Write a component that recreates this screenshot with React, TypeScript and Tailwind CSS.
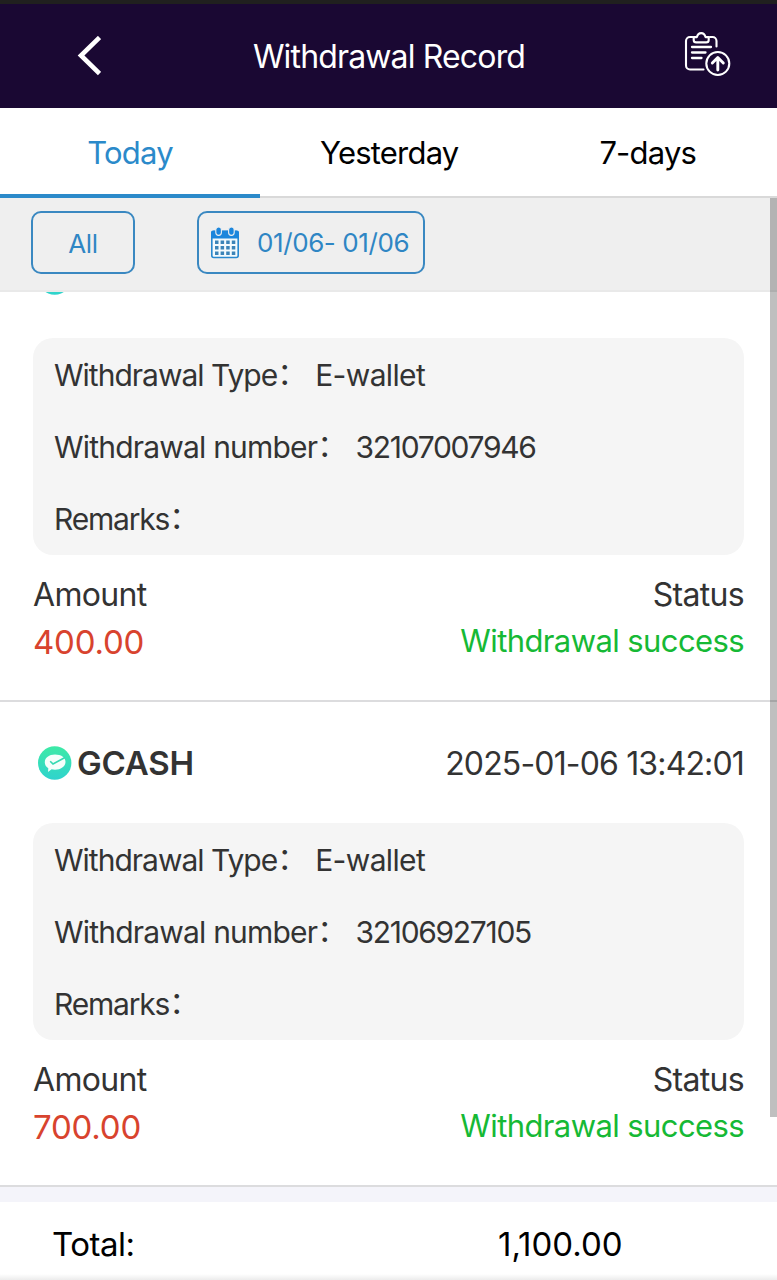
import React from 'react';

type RecordItem = {
  wallet?: string;
  time?: string;
  type: string;
  number: string;
  remarks: string;
  amount: string;
  status: string;
};

const tabs = ['Today', 'Yesterday', '7-days'];

const records: RecordItem[] = [
  {
    type: 'E-wallet',
    number: '32107007946',
    remarks: '',
    amount: '400.00',
    status: 'Withdrawal success',
  },
  {
    wallet: 'GCASH',
    time: '2025-01-06 13:42:01',
    type: 'E-wallet',
    number: '32106927105',
    remarks: '',
    amount: '700.00',
    status: 'Withdrawal success',
  },
];

const BackIcon: React.FC = () => (
  <svg className="w-[26px] h-10" viewBox="0 0 26 40" fill="none">
    <path d="M24.500 1.500 6 19.500l18.500 18" stroke="#fff" strokeWidth="4.600" />
  </svg>
);

const ClipboardUploadIcon: React.FC = () => (
  <svg className="w-12 h-12" viewBox="0 0 48 48" fill="none" stroke="#fff" strokeLinecap="round" strokeLinejoin="round">
    <path d="M8.500 5H6a4 4 0 0 0-4 4V33.500a4 4 0 0 0 4 4h13.500M26 5h2.500a4 4 0 0 1 4 4V14.500" strokeWidth="2.100" />
    <path d="M9.700 4.500h3.200c.6-2.500 2-4 4.300-4s3.700 1.500 4.300 4h3.200v2.800a2.500 2.500 0 0 1-2.500 2.500h-10a2.500 2.500 0 0 1-2.500-2.500z" transform="translate(0 0.600)" strokeWidth="2.100" />
    <path d="M8 15h19M8 20.500h13.500M8 26h9.500" strokeWidth="2.300" />
    <circle cx="33.800" cy="31.500" r="11.500" strokeWidth="2.100" />
    <path d="M33.800 38V26.500M28.300 31l5.500-5.500 5.500 5.500" strokeWidth="2.900" />
  </svg>
);

const CalendarIcon: React.FC = () => (
  <svg className="w-7 h-8" viewBox="0 0 28 32">
    <rect x="0.800" y="4.500" width="26.400" height="26" rx="2" fill="#f3fafd" stroke="#2788cf" strokeWidth="1.600" />
    <path d="M0 11.500V5.500a2 2 0 0 1 2-2h24a2 2 0 0 1 2 2v6z" fill="#1c86dc" />
    <rect x="4.800" y="0" width="5.600" height="8.400" rx="2.800" fill="#1c86dc" stroke="#efefef" strokeWidth="1.100" />
    <rect x="17.600" y="0" width="5.600" height="8.400" rx="2.800" fill="#1c86dc" stroke="#efefef" strokeWidth="1.100" />
    {[13.5, 19, 24.5].map((y) =>
      [4, 9.6, 15.2, 20.8].map((x) => <rect key={`${x}-${y}`} x={x} y={y} width="3.500" height="3.500" fill="#3b84b8" />)
    )}
  </svg>
);

const WalletLogo: React.FC = () => (
  <svg className="w-[34px] h-[34px]" viewBox="0 0 34 34">
    <defs>
      <linearGradient id="wallet" x1="0" y1="0" x2="0" y2="1">
        <stop offset="0" stopColor="#3deaa6" />
        <stop offset="1" stopColor="#2fd3cd" />
      </linearGradient>
    </defs>
    <circle cx="16.700" cy="17" r="16.700" fill="url(#wallet)" />
    <path d="M17 8.500c6 0 10.500 2.800 10.500 7.300 0 4.800-4.800 7.900-10.500 7.900-1.300 0-2.400-.1-3.400-.4L10 26l.3-3.800C8 20.900 6.800 18.900 6.800 16.300c0-4.700 4.400-7.800 10.200-7.800z" fill="#f4fffb" />
    <path d="M12.200 15.200l2.800 2.800L27 11.500" fill="none" stroke="#35d9b2" strokeWidth="1.600" />
  </svg>
);

const Colon: React.FC = () => <span className="relative -top-[2px]">：</span>;

const RecordCard: React.FC<{ item: RecordItem }> = ({ item }) => (
  <div className="flex h-[485px] shrink-0 flex-col border-b-2 border-[#dcdcde] pl-[33px] pr-8 text-[#333]">
    <div className="flex h-[121px] items-center justify-between pl-[5px]">
      <div className="flex items-center gap-[5px]">
        <WalletLogo />
        <span className="pt-0.5 text-[33px] font-semibold tracking-[-0.2px]">{item.wallet}</span>
      </div>
      <span className="pr-[1px] pt-0.5 text-[32px] tracking-[-0.85px]">{item.time}</span>
    </div>

    <div className="mr-[1px] flex h-[217px] flex-col rounded-[20px] bg-[#f5f5f5] px-[21px] pt-0.5 text-[30px]">
      <div className="flex flex-1 items-center">
        <span className="tracking-[-1px]">Withdrawal Type<Colon /></span>
        <span className="ml-[9px] tracking-[-0.65px]">{item.type}</span>
      </div>
      <div className="flex flex-1 items-center">
        <span className="tracking-[-0.8px]">Withdrawal number<Colon /></span>
        <span className="ml-[9px] tracking-[-1.3px]">{item.number}</span>
      </div>
      <div className="flex flex-1 items-center">
        <span className="tracking-[-1.2px]">Remarks<Colon /></span>
        <span className="ml-[9px]">{item.remarks}</span>
      </div>
    </div>

    <div className="flex justify-between pt-4 leading-[48px]">
      <div className="flex flex-col">
        <span className="text-[32px] tracking-[-0.7px]">Amount</span>
        <span className="-mt-px text-[33px] tracking-[-0.2px] text-[#d8432e]">{item.amount}</span>
      </div>
      <div className="flex flex-col pr-[1px] text-right">
        <span className="text-[32px] tracking-[-0.7px]">Status</span>
        <span className="-mt-0.5 text-[31px] tracking-[-0.6px] text-[#16b935]">{item.status}</span>
      </div>
    </div>
  </div>
);

export default function App() {
  return (
    <div className="relative flex h-[1280px] w-[777px] flex-col overflow-hidden bg-white font-[Inter,'Noto_Sans_CJK_SC',sans-serif] font-[375] whitespace-nowrap">
      {/* Header */}
      <header className="flex h-[108px] shrink-0 items-center justify-between border-t-4 border-[#20201f] bg-[#1a0833] pl-[75px] pr-[45px] text-white">
        <BackIcon />
        <h1 className="pt-[1px] pr-[7px] text-[32px] tracking-[-0.85px]">Withdrawal Record</h1>
        <ClipboardUploadIcon />
      </header>

      {/* Date tabs */}
      <nav className="flex h-[90px] shrink-0 text-[31px] tracking-[-0.8px] text-black">
        {tabs.map((tab, i) => (
          <div
            key={tab}
            className={
              i === 0
                ? 'flex w-[260px] items-center justify-center border-b-4 border-[#2b8aca] pt-1 text-[#2b8aca]'
                : 'flex flex-1 items-center justify-center border-b-2 border-[#d9d9d9] pt-0.5'
            }
          >
            {tab}
          </div>
        ))}
      </nav>

      {/* Filters */}
      <div className="flex h-[94px] shrink-0 items-start gap-[62px] border-b-2 border-[#e9e9e9] bg-[#efefef] pl-[31px] pt-[13px] text-[#2f86c4]">
        <div className="flex h-[63px] w-[104px] items-center justify-center rounded-[10px] border-2 border-[#3a88c1] pt-0.5 text-[26px] tracking-[-0.3px]">
          All
        </div>
        <div className="flex h-[63px] w-[228px] items-center rounded-[10px] border-2 border-[#3a88c1] pl-3 text-[26px] tracking-[-0.4px]">
          <CalendarIcon />
          <span className="ml-[18px]">01/06- 01/06</span>
        </div>
      </div>

      {/* Record list, scrolled to the end */}
      <div className="flex h-[895px] shrink-0 flex-col justify-end overflow-hidden">
        {records.map((item) => (
          <RecordCard key={item.number} item={item} />
        ))}
      </div>

      {/* Total */}
      <footer className="flex flex-1 items-center border-t-[15px] border-[#f4f4fa] pl-[52px] pt-2 text-[33px] tracking-[-0.5px] text-black">
        <span className="w-[446px]">Total:</span>
        <span className="tracking-normal">1,100.00</span>
      </footer>
      <div className="absolute bottom-0 left-0 h-1.5 w-full bg-linear-to-b from-white to-[#ececec]" />

      {/* Scrollbar */}
      <div className="absolute right-0 top-[198px] h-[919px] w-[7px] bg-black/25" />
    </div>
  );
}
